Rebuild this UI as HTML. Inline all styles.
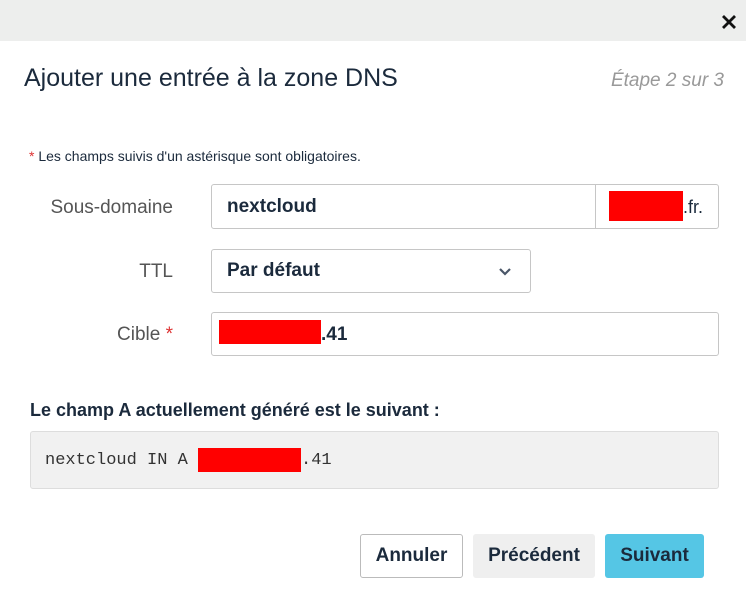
<!DOCTYPE html>
<html><head><meta charset="utf-8"><style>
*{box-sizing:border-box;margin:0;padding:0}
body{width:746px;height:609px;background:#fff;font-family:"Liberation Sans",sans-serif;color:#1b2a3c;position:relative;overflow:hidden}
.a{position:absolute}
.hdr{left:0;top:0;width:746px;height:41px;background:#edeeed}
.lbl{font-size:19px;color:#555;text-align:right;width:150px;left:23px}
.in{border:1px solid #c6c6c6;border-radius:3px;background:#fff}
.red{background:#f00}
.btn{border-radius:3px;font-size:19px;font-weight:bold;text-align:center;line-height:44px;height:44px;top:534px}
</style></head><body>
<div class="a hdr"></div>
<svg class="a" style="left:721px;top:14px" width="16" height="16" viewBox="0 0 16 16"><path d="M2 2L14 14M14 2L2 14" stroke="#111" stroke-width="2.8"/></svg>
<div class="a" style="left:24px;top:64px;font-size:25px;">Ajouter une entrée à la zone DNS</div>
<div class="a" style="right:22px;top:70px;font-size:19px;font-style:italic;color:#999">Étape 2 sur 3</div>
<div class="a" style="left:29px;top:148px;font-size:14px"><span style="color:#d33">*</span> Les champs suivis d'un astérisque sont obligatoires.</div>
<div class="a lbl" style="top:197px">Sous-domaine</div>
<div class="a in" style="left:211px;top:184px;width:508px;height:45px"></div>
<div class="a" style="left:595px;top:185px;width:1px;height:43px;background:#c6c6c6"></div>
<div class="a" style="left:227px;top:196px;font-size:19px;font-weight:bold">nextcloud</div>
<div class="a red" style="left:609px;top:191px;width:74px;height:30px"></div>
<div class="a" style="left:683px;top:197px;font-size:18px">.fr.</div>
<div class="a lbl" style="top:261px">TTL</div>
<div class="a in" style="left:211px;top:249px;width:320px;height:44px"></div>
<div class="a" style="left:227px;top:260px;font-size:19px;font-weight:bold">Par défaut</div>
<svg class="a" style="left:498px;top:267px" width="14" height="10" viewBox="0 0 14 10"><path d="M2 2L7 7L12 2" stroke="#4a5668" stroke-width="2.2" fill="none"/></svg>
<div class="a lbl" style="top:324px">Cible <span style="color:#d33">*</span></div>
<div class="a in" style="left:211px;top:312px;width:508px;height:44px"></div>
<div class="a red" style="left:219px;top:320px;width:102px;height:24px"></div>
<div class="a" style="left:321px;top:324px;font-size:19px;font-weight:bold">.41</div>
<div class="a" style="left:30px;top:400px;font-size:18px;font-weight:bold">Le champ A actuellement généré est le suivant :</div>
<div class="a" style="left:30px;top:431px;width:689px;height:58px;background:#f1f1f1;border:1px solid #ddd;border-radius:3px"></div>
<div class="a" style="left:45px;top:451px;font-family:'Liberation Mono',monospace;font-size:17px;color:#333">nextcloud IN A</div>
<div class="a red" style="left:198px;top:448px;width:103px;height:24px"></div>
<div class="a" style="left:301px;top:451px;font-family:'Liberation Mono',monospace;font-size:17px;color:#333">.41</div>
<div class="a btn" style="left:360px;width:103px;border:1px solid #bbb;line-height:42px">Annuler</div>
<div class="a btn" style="left:473px;width:122px;background:#efefef">Précédent</div>
<div class="a btn" style="left:605px;width:99px;background:#55c6e5">Suivant</div>
</body></html>
